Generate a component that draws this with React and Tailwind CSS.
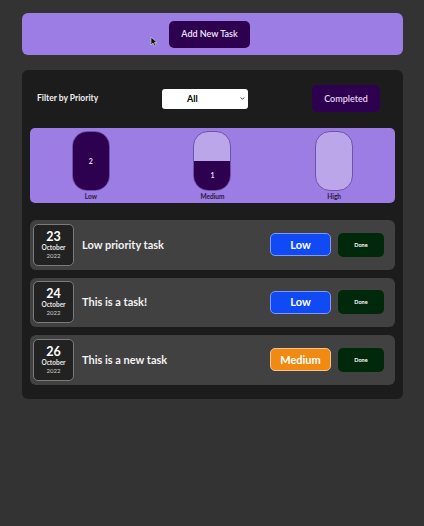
import React from "react";

const tasks = [
  { day: "23", title: "Low priority task", p: "Low" },
  { day: "24", title: "This is a task!", p: "Low" },
  { day: "26", title: "This is a new task", p: "Medium" },
];

function Pill({ label, fill, count }) {
  return (
    <div className="flex flex-col items-center">
      <div className="w-[38px] h-[60px] rounded-[15px] border border-[#6f52a8] bg-[#bba6ea] overflow-hidden flex flex-col justify-end">
        {fill > 0 && (
          <div
            className="bg-[#2e0050] w-full flex items-center justify-center text-[7px] font-bold text-[#e6dcf5]"
            style={{ height: `${fill}%` }}
          >
            {count}
          </div>
        )}
      </div>
      <div className="mt-[1px] text-[6.5px] leading-[9px] font-bold text-[#2a1742]">{label}</div>
    </div>
  );
}

function TaskRow({ t }) {
  const badge =
    t.p === "Low"
      ? "bg-[#0f4af5] border-[#7f98f0]"
      : "bg-[#f08a12] border-[#f6c48a]";
  return (
    <div className="h-[49.5px] rounded-[6px] bg-[#414141] flex items-center pl-[3px] pr-[11px]">
      <div className="w-[41px] h-[42px] rounded-[5px] border border-[#7a7a7a] bg-[#222222] flex flex-col items-center justify-center">
        <div className="text-[12.5px] leading-[13px] font-bold text-white">{t.day}</div>
        <div className="text-[6.5px] leading-[8px] font-bold text-[#e8e8e8] mt-[1px]">October</div>
        <div className="text-[6px] leading-[8px] text-[#cfcfcf]">2022</div>
      </div>
      <div className="ml-[8px] text-[11px] font-bold text-[#f2f2f2]">{t.title}</div>
      <div className="ml-auto flex items-center gap-[7px]">
        <div className={`w-[61px] h-[23px] rounded-[5px] border ${badge} flex items-center justify-center text-[11px] font-bold text-white`}>
          {t.p}
        </div>
        <div className="w-[46px] h-[24px] rounded-[5px] bg-[#00280a] flex items-center justify-center text-[5.5px] font-bold text-white">
          Done
        </div>
      </div>
    </div>
  );
}

export default function App() {
  return (
    <div
      className="relative min-h-[526px] w-[424px] bg-[#333333] pl-[22px] pr-[21px] pt-[13px]"
      style={{ fontFamily: "Lato, 'Noto Sans', sans-serif" }}
    >
      <div className="h-[42px] rounded-[6px] bg-[#9b7de3] flex items-center pl-[147px]">
        <div className="w-[81px] h-[27px] rounded-[5px] bg-[#2e0050] flex items-center justify-center text-[9px] font-semibold text-[#eee6f7]">
          Add New Task
        </div>
      </div>
      <svg className="absolute left-[150px] top-[36px]" width="8" height="11" viewBox="0 0 8 11">
        <path d="M1 1 L1 9 L3 7 L4.5 10 L5.8 9.4 L4.4 6.5 L7 6.5 Z" fill="#111" stroke="#ddd" strokeWidth="0.6" />
      </svg>

      <div className="mt-[15px] rounded-[6px] bg-[#1c1c1c] px-[8px] pt-[15px] pb-[14px]">
        <div className="flex items-center h-[27px] pl-[7px] pr-[15px]">
          <div className="w-[125px] text-[8.5px] font-bold text-[#f0f0f0]">Filter by Priority</div>
          <div className="relative w-[86px] h-[20px] rounded-[3px] bg-white flex items-center">
            <span className="ml-[25px] w-[10px] text-center text-[9px] font-bold text-black">All</span>
            <svg className="absolute right-[3px] top-[7px]" width="5" height="5" viewBox="0 0 5 5">
              <path d="M0.8 1.5 L2.5 3.3 L4.2 1.5" stroke="#222" strokeWidth="0.9" fill="none" />
            </svg>
          </div>
          <div className="ml-auto w-[68px] h-[27px] rounded-[5px] bg-[#2e0050] flex items-center justify-center text-[9px] font-semibold text-[#e3d6f0]">
            Completed
          </div>
        </div>

        <div className="mt-[16px] h-[75px] rounded-[5px] bg-[#9b7de3] grid grid-cols-3 pt-[3px]">
          <Pill label="Low" fill={100} count="2" />
          <Pill label="Medium" fill={50} count="1" />
          <Pill label="High" fill={0} count="" />
        </div>

        <div className="mt-[17px] flex flex-col gap-[8px]">
          {tasks.map((t) => (
            <TaskRow key={t.day} t={t} />
          ))}
        </div>
      </div>
    </div>
  );
}
